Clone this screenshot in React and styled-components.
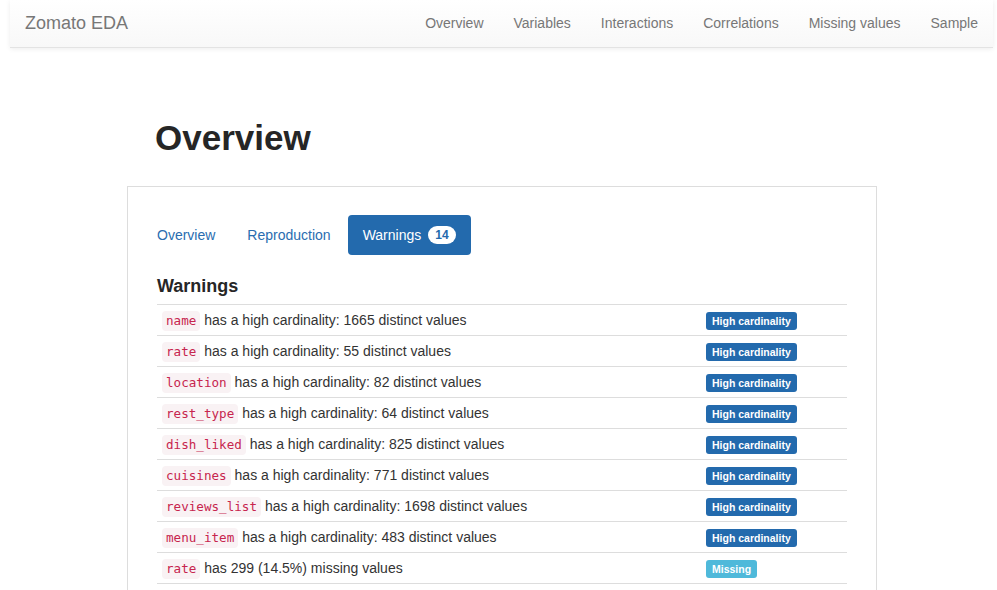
import React from "react";
import styled, { createGlobalStyle } from "styled-components";

const Global = createGlobalStyle`
  html, body { margin: 0; padding: 0; background: #fff; overflow: hidden; }
  body {
    font-family: "Liberation Sans", Arial, sans-serif;
    font-size: 14px;
    line-height: 20px;
    color: #333;
  }
  * { box-sizing: border-box; }
`;

const Navbar = styled.nav`
  margin: 0 4px 0 10px;
  height: 48px;
  display: flex;
  align-items: center;
  justify-content: space-between;
  background-image: linear-gradient(to bottom, #fff 0%, #f8f8f8 100%);
  border-bottom: 1px solid #e3e3e3;
  box-shadow: inset 0 1px 0 rgba(255,255,255,.15), 0 1px 5px rgba(0,0,0,.075);
`;

const Brand = styled.a`
  padding: 0 15px;
  margin-top: -2px;
  font-size: 18px;
  color: #777;
  text-decoration: none;
  line-height: 20px;
`;

const NavList = styled.ul`
  display: flex;
  list-style: none;
  margin: -2px 0 0;
  padding: 0;
`;

const NavLink = styled.a`
  display: block;
  padding: 14px 15px;
  color: #777;
  text-decoration: none;
  font-size: 14px;
`;

const Main = styled.main`
  width: 750px;
  margin: 0 0 0 127px;
`;

const Title = styled.h1`
  margin: 0 0 0 28px;
  padding-top: 70px;
  height: 138px;
  font-size: 35px;
  line-height: 40px;
  font-weight: 700;
  color: #262626;
`;

const Panel = styled.section`
  border: 1px solid #ddd;
  border-bottom: none;
  padding: 28px 29px 0 14px;
  height: 420px;
`;

const Pills = styled.ul`
  display: flex;
  list-style: none;
  margin: 0;
  padding: 0;
  gap: 2px;
`;

const Pill = styled.a`
  display: flex;
  align-items: center;
  padding: 10px 15px;
  border-radius: 4px;
  text-decoration: none;
  font-size: 14px;
  line-height: 20px;
  color: ${p => (p.$active ? "#fff" : "#2a6db0")};
  background: ${p => (p.$active ? "#236aad" : "transparent")};
`;

const Count = styled.span`
  display: inline-block;
  margin-left: 7px;
  padding: 2px 7px 2px;
  font-size: 12px;
  font-weight: 700;
  line-height: 14px;
  border-radius: 10px;
  background: #fff;
  color: #236aad;
`;

const Body = styled.div`
  padding-left: 15px;
`;

const SubTitle = styled.h4`
  margin: 20px 0 0;
  font-size: 18px;
  line-height: 22px;
  font-weight: 700;
  color: #262626;
  height: 29px;
`;

const Table = styled.div`
  width: 690px;
  border-top: 1px solid #ddd;
`;

const Row = styled.div`
  display: grid;
  grid-template-columns: 1fr 146px;
  border-bottom: 1px solid #ddd;
`;

const Cell = styled.div`
  height: 30px;
  padding: 5px;
  line-height: 20px;
  white-space: nowrap;
`;

const Code = styled.code`
  padding: 2px 4px 3px;
  font-family: "DejaVu Sans Mono", "Liberation Mono", monospace;
  font-size: 12.6px;
  line-height: 16px;
  color: #c7254e;
  background: #f9f2f4;
  border-radius: 4px;
`;

const Label = styled.span`
  display: inline-block;
  padding: 3px 6px 3px;
  font-size: 10.5px;
  font-weight: 700;
  line-height: 12px;
  color: #fff;
  border-radius: 3px;
  vertical-align: middle;
  background: ${p => (p.$kind === "missing" ? "#4fb9da" : "#236aad")};
`;

const navItems = ["Overview", "Variables", "Interactions", "Correlations", "Missing values", "Sample"];

const warnings = [
  ["name", "has a high cardinality: 1665 distinct values", "High cardinality", "high"],
  ["rate", "has a high cardinality: 55 distinct values", "High cardinality", "high"],
  ["location", "has a high cardinality: 82 distinct values", "High cardinality", "high"],
  ["rest_type", "has a high cardinality: 64 distinct values", "High cardinality", "high"],
  ["dish_liked", "has a high cardinality: 825 distinct values", "High cardinality", "high"],
  ["cuisines", "has a high cardinality: 771 distinct values", "High cardinality", "high"],
  ["reviews_list", "has a high cardinality: 1698 distinct values", "High cardinality", "high"],
  ["menu_item", "has a high cardinality: 483 distinct values", "High cardinality", "high"],
  ["rate", "has 299 (14.5%) missing values", "Missing", "missing"],
];

export default function App() {
  return (
    <>
      <Global />
      <Navbar>
        <Brand href="#">Zomato EDA</Brand>
        <NavList>
          {navItems.map(n => (
            <li key={n}><NavLink href="#">{n}</NavLink></li>
          ))}
        </NavList>
      </Navbar>
      <Main>
        <Title>Overview</Title>
        <Panel>
          <Pills>
            <li><Pill href="#">Overview</Pill></li>
            <li><Pill href="#">Reproduction</Pill></li>
            <li><Pill href="#" $active>Warnings <Count>14</Count></Pill></li>
          </Pills>
          <Body>
            <SubTitle>Warnings</SubTitle>
            <Table>
              {warnings.map(([c, t, l, k], i) => (
                <Row key={i}>
                  <Cell><Code>{c}</Code> {t}</Cell>
                  <Cell><Label $kind={k}>{l}</Label></Cell>
                </Row>
              ))}
            </Table>
          </Body>
        </Panel>
      </Main>
    </>
  );
}
